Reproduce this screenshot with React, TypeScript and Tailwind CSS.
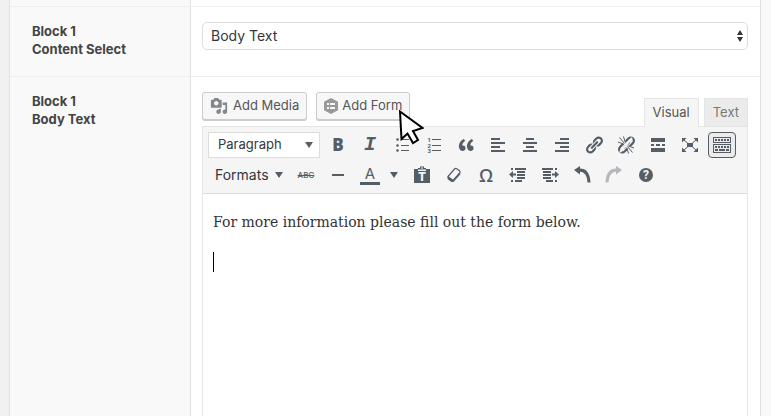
import React from 'react';

type IconProps = { children: React.ReactNode; className?: string };

const Icon = ({ children, className = 'h-5 w-5' }: IconProps) => (
  <svg viewBox="0 0 20 20" className={`${className} shrink-0 fill-current`} aria-hidden="true">
    {children}
  </svg>
);

const ToolButton = ({ label, active, children }: { label: string; active?: boolean; children: React.ReactNode }) => (
  <button
    type="button"
    aria-label={label}
    title={label}
    className={`flex h-[26px] w-7 shrink-0 items-center justify-center rounded-sm ${
      active ? 'border border-[#555d66] bg-[#ebebeb]' : ''
    }`}
  >
    {children}
  </button>
);

const DownArrow = () => (
  <svg viewBox="0 0 8 6" className="h-[6px] w-2 fill-[#555d66]" aria-hidden="true">
    <path d="M0 0h8L4 6z" />
  </svg>
);

const linkPath =
  'M17.74 2.76c1.68 1.69 1.68 4.41 0 6.1l-1.53 1.52c-1.12 1.12-2.7 1.47-4.14 1.09l2.62-2.61.76-.77.76-.76c.84-.84.84-2.2 0-3.04-.84-.85-2.2-.85-3.04 0l-.77.76-3.38 3.38c-.37-1.44-.02-3.02 1.1-4.14l1.52-1.53c1.69-1.68 4.42-1.68 6.1 0zM8.59 13.43l5.34-5.34c.42-.42.42-1.1 0-1.52-.44-.43-1.13-.39-1.53 0l-5.33 5.34c-.42.42-.42 1.1 0 1.52.44.43 1.13.39 1.52 0zm-.76 2.29l4.14-4.15c.38 1.44.03 3.02-1.09 4.14l-1.52 1.53c-1.69 1.68-4.41 1.68-6.1 0-1.68-1.68-1.68-4.42 0-6.1l1.53-1.52c1.12-1.12 2.7-1.47 4.14-1.1l-4.14 4.15c-.85.84-.85 2.2 0 3.05.84.84 2.2.84 3.04 0z';

const FormatRow = () => (
  <div className="flex flex-wrap items-center gap-1">
    <div className="relative">
      <select
        aria-label="Block format"
        className="block h-[26px] w-28 appearance-none border border-[#ddd] bg-white pl-[9px] text-[13px] text-[#32373c]"
      >
        <option>Paragraph</option>
      </select>
      <span className="pointer-events-none absolute inset-y-0 right-[7px] flex items-center">
        <DownArrow />
      </span>
    </div>
    <ToolButton label="Bold">
      <span className="font-['Open_Sans'] text-[17px] leading-5 font-extrabold">B</span>
    </ToolButton>
    <ToolButton label="Italic">
      <span className="font-['Liberation_Mono'] text-xl leading-5 font-bold italic">I</span>
    </ToolButton>
    <ToolButton label="Bulleted list">
      <Icon>
        <circle cx="5.500" cy="4.500" r="1.300" />
        <circle cx="5.500" cy="10.500" r="1.300" />
        <circle cx="5.500" cy="15.500" r="1.300" />
        <path d="M9 4h8v1H9zM9 10h8v1H9zM9 15h8v1H9z" />
      </Icon>
    </ToolButton>
    <ToolButton label="Numbered list">
      <Icon>
        <g className="font-['Roboto'] text-[6px] font-bold">
          <text x="3.500" y="6.500">1</text>
          <text x="3.500" y="12.500">2</text>
          <text x="3.500" y="18">3</text>
        </g>
        <path d="M8 4h9v1H8zM8 10h9v1H8zM8 15h9v1H8z" />
      </Icon>
    </ToolButton>
    <ToolButton label="Blockquote">
      <Icon>
        <path d="M9.49 13.22c0-.74-.2-1.38-.61-1.9-.62-.78-1.83-.88-2.53-.72-.29-1.65 1.11-3.75 2.92-4.65L7.88 4c-2.73 1.3-5.42 4.28-4.96 8.05C3.21 14.43 4.59 16 6.54 16c.85 0 1.56-.25 2.12-.75s.83-1.18.83-2.03zm8.05 0c0-.74-.2-1.38-.61-1.9-.63-.78-1.83-.88-2.53-.72-.29-1.65 1.11-3.75 2.92-4.65L15.93 4c-2.73 1.3-5.41 4.28-4.95 8.05.29 2.38 1.66 3.95 3.61 3.95.85 0 1.56-.25 2.12-.75s.83-1.18.83-2.03z" />
      </Icon>
    </ToolButton>
    <ToolButton label="Align left">
      <Icon>
        <path d="M12 5V3H3v2h9zm5 4V7H3v2h14zm-5 4v-2H3v2h9zm5 4v-2H3v2h14z" />
      </Icon>
    </ToolButton>
    <ToolButton label="Align center">
      <Icon>
        <path d="M14 5V3H6v2h8zm3 4V7H3v2h14zm-3 4v-2H6v2h8zm3 4v-2H3v2h14z" />
      </Icon>
    </ToolButton>
    <ToolButton label="Align right">
      <Icon>
        <path d="M17 5V3H8v2h9zm0 4V7H3v2h14zm0 4v-2H8v2h9zm0 4v-2H3v2h14z" />
      </Icon>
    </ToolButton>
    <ToolButton label="Insert link">
      <Icon>
        <path d={linkPath} />
      </Icon>
    </ToolButton>
    <ToolButton label="Remove link">
      <Icon>
        <path d={linkPath} />
        <path d="M4 2l12 16M16 3L4 17" className="fill-none stroke-[#f5f5f5] stroke-2" />
        <path
          d="M3.500 2.500l5 6M7.500 1.500l1.700 5.700M2 7l5.500 2M16.500 17.500l-5-6M12.500 18.500l-1.700-5.700M18 13l-5.500-2"
          className="fill-none stroke-current stroke-1"
        />
      </Icon>
    </ToolButton>
    <ToolButton label="Insert Read More tag">
      <Icon>
        <path d="M17 7V3H3v4h14zM6 11V9H3v2h3zm6 0V9H8v2h4zm5 0V9h-3v2h3zm0 6v-4H3v4h14z" />
      </Icon>
    </ToolButton>
    <ToolButton label="Fullscreen">
      <Icon>
        <path d="M7 8h6v4H7zM2 3h4.500L2 7.500zM18 3v4.500L13.500 3zM2 17v-4.500L6.500 17zM18 17h-4.500l4.500-4.500z" />
        <path d="M3.500 4.500L8 8.500M16.500 4.500L12 8.500M3.500 15.500L8 11.500M16.500 15.500L12 11.500" className="stroke-current stroke-1" />
      </Icon>
    </ToolButton>
    <ToolButton label="Toolbar toggle" active>
      <Icon>
        <path
          fillRule="evenodd"
          d="M1 2h18v6H1zM2 3v4h16V3zM3 4h2v2H3zM6 4h2v2H6zM9 4h2v2H9zM12 4h2v2h-2zM15 4h2v2h-2zM1 9h18v9H1zM2 10v7h16v-7zM3 11h2v2H3zM6 11h2v2H6zM9 11h2v2H9zM12 11h2v2h-2zM15 11h2v2h-2zM3 14h3v2H3zM7 14h6v2H7zM14 14h3v2h-3z"
        />
      </Icon>
    </ToolButton>
  </div>
);

const AdvancedRow = () => (
  <div className="flex flex-wrap items-center gap-1">
    <div className="relative">
      <select
        aria-label="Formats"
        className="block h-[26px] w-20 appearance-none bg-transparent pl-[7px] text-sm text-[#32373c]"
      >
        <option>Formats</option>
      </select>
      <span className="pointer-events-none absolute inset-y-0 right-[5px] flex items-center">
        <DownArrow />
      </span>
    </div>
    <ToolButton label="Strikethrough">
      <span className="text-[8px] leading-3 font-medium line-through">ABC</span>
    </ToolButton>
    <ToolButton label="Horizontal line">
      <Icon>
        <path d="M4 9h12v2H4z" />
      </Icon>
    </ToolButton>
    <div className="flex">
      <ToolButton label="Text color">
        <span className="w-5 border-b-3 border-[#555d66] text-center text-[15px] leading-4">A</span>
      </ToolButton>
      <button type="button" aria-label="Choose text color" className="flex w-5 items-center justify-center">
        <DownArrow />
      </button>
    </div>
    <ToolButton label="Paste as text">
      <Icon>
        <path d="M2 4h4V3h2V1.500h4V3h2v1h4v14H2z" />
        <path d="M6 4.500h8v1.500H6zM9 2.500h2v1H9z" className="fill-[#f5f5f5]" />
        <text x="10" y="16" textAnchor="middle" className="fill-[#f5f5f5] font-['Roboto'] text-[12px] font-black">
          T
        </text>
      </Icon>
    </ToolButton>
    <ToolButton label="Clear formatting">
      <Icon>
        <path
          d="M4 11.500L10.500 4Q11.500 3 12.700 3.800L15.500 5.800Q16.600 6.700 15.700 8L9 15.500Z"
          className="fill-none stroke-current"
          strokeWidth="1.200"
        />
        <path d="M3.500 11.500l5.500 4L16.200 7.200V9.500L9.500 17H7.500L4 14.500Q3 13.500 3.500 11.500z" />
      </Icon>
    </ToolButton>
    <ToolButton label="Special character">
      <span className="font-['Open_Sans'] text-lg leading-5 font-semibold">Ω</span>
    </ToolButton>
    <ToolButton label="Decrease indent">
      <Icon>
        <path d="M7 3h11v2H7zM3 3h2v2H3zM9 6h8v2H9zM9 9h8v2H9zM9 12h8v2H9zM7 15h7v2H7zM3 15h2v2H3zM1 9.500L5 6v2.500h3v2H5V13z" />
      </Icon>
    </ToolButton>
    <ToolButton label="Increase indent">
      <Icon>
        <path d="M2 3h11v2H2zM15 3h2v2h-2zM3 6h8v2H3zM3 9h8v2H3zM3 12h8v2H3zM6 15h7v2H6zM15 15h2v2h-2zM19 9.500L15 6v2.500h-3v2h3V13z" />
      </Icon>
    </ToolButton>
    <ToolButton label="Undo">
      <Icon>
        <path d="M2 5l6-4v2.500c6 0 10 4 10.500 14h-3C15 10.500 12.500 7 8 6.800V9.500z" />
      </Icon>
    </ToolButton>
    <ToolButton label="Redo">
      <Icon className="h-5 w-5 opacity-40">
        <path d="M18 5l-6-4v2.500c-6 0-10 4-10.500 14h3C5 10.500 7.500 7 12 6.800V9.500z" />
      </Icon>
    </ToolButton>
    <ToolButton label="Keyboard shortcuts">
      <Icon>
        <circle cx="10" cy="10" r="7" />
        <text x="10" y="14" textAnchor="middle" className="fill-[#f5f5f5] font-['Roboto'] text-[12px] font-bold">
          ?
        </text>
      </Icon>
    </ToolButton>
  </div>
);

const mediaButton =
  'relative flex h-7 items-center rounded-[3px] border border-[#ccc] bg-[#f7f7f7] px-[7px] text-[13px] text-[#555] shadow-[0_1px_0_#ccc]';

const Editor = () => (
  <div>
    <div className="flex items-start justify-between">
      <div className="flex gap-[9px]">
        <button type="button" className={mediaButton}>
          <Icon className="mr-[5px] h-[18px] w-[18px] text-[#82878c]">
            <path d="M13 11V4c0-.55-.45-1-1-1h-1.67L9 1H5L3.67 3H2c-.55 0-1 .45-1 1v7c0 .55.45 1 1 1h10c.55 0 1-.45 1-1zM7 4.500c1.380 0 2.500 1.120 2.500 2.500S8.380 9.500 7 9.500 4.500 8.380 4.500 7 5.620 4.500 7 4.500zM14 6h5v10.500c0 1.380-1.120 2.500-2.500 2.500S14 17.880 14 16.500s1.120-2.500 2.500-2.500c.17 0 .34.02.5.05V9h-3V6zm-4 8.050V13h2v3.500c0 1.380-1.120 2.500-2.500 2.500S7 17.880 7 16.500 8.120 14 9.500 14c.17 0 .34.02.5.050z" />
          </Icon>
          Add Media
        </button>
        <button type="button" className={mediaButton}>
          <svg viewBox="0 0 14 16" className="mr-1 h-4 w-[14px] fill-[#999]" aria-hidden="true">
            <path d="M7 0l7 3.700v8.600L7 16l-7-3.700V3.700z" />
            <path d="M3 5h2v2H3zM6 5h5v2H6zM3 9h2v2H3zM6 9h5v2H6z" className="fill-[#f7f7f7]" />
          </svg>
          Add Form
          {/* mouse pointer */}
          <svg viewBox="0 0 26 36" className="pointer-events-none absolute top-4 left-[81px] h-9 w-[26px]" aria-hidden="true">
            <path
              d="M2 2.500L3.500 30l6-5.500 5.500 9.500 5-3-5-9 9.500-3z"
              className="fill-white stroke-black"
              strokeWidth="2"
            />
          </svg>
        </button>
      </div>
      <div className="mt-[6px] flex gap-[5px] text-[13px]">
        <button type="button" className="-mb-px h-[29px] border border-b-0 border-[#e5e5e5] bg-[#f5f5f5] px-2 text-[#555]">
          Visual
        </button>
        <button type="button" className="h-7 border border-b-0 border-[#e5e5e5] bg-[#ebebeb] px-2 text-[#777]">
          Text
        </button>
      </div>
    </div>
    <div className="border border-[#e5e5e5]">
      <div className="flex flex-col gap-1 border-b border-[#ddd] bg-[#f5f5f5] p-[5px] text-[#555d66]">
        <FormatRow />
        <AdvancedRow />
      </div>
      <div className="relative">
        <textarea
          aria-label="Body Text"
          rows={12}
          defaultValue="For more information please fill out the form below."
          className="block w-full resize-none bg-white px-[10px] pt-4 font-['DejaVu_Serif',serif] text-sm leading-6 text-[#333] outline-none"
        />
        <span className="absolute top-[58px] left-[10px] h-5 w-px bg-black" />
      </div>
    </div>
  </div>
);

const Row = ({ title, name, htmlFor, children }: { title: string; name: string; htmlFor?: string; children: React.ReactNode }) => (
  <div className="grid grid-cols-[181px_minmax(0,1fr)] border-t border-[#eee]">
    <div className="border-r border-[#e1e1e1] bg-[#f9f9f9] py-[15px] pl-[22px]">
      <label htmlFor={htmlFor} className="block text-[13px] leading-[18px] font-bold text-[#444]">
        {title}
        <br />
        {name}
      </label>
    </div>
    <div className="py-[15px] pr-3 pl-[11px]">{children}</div>
  </div>
);

export default function App() {
  return (
    <div className="flex h-screen overflow-hidden bg-[#f9f9f9] pr-[10px] font-['Inter',sans-serif]">
      <div className="w-[9px] shrink-0 bg-[#f1f1f1]" />
      <main className="min-w-0 flex-1 border-x border-[#e1e1e1] bg-white">
        <div className="grid grid-cols-[181px_minmax(0,1fr)]">
          <div className="h-[6px] border-r border-[#e1e1e1] bg-[#f9f9f9]" />
        </div>
        <Row title="Block 1" name="Content Select" htmlFor="content-select">
          <div className="relative h-[39px]">
            <select
              id="content-select"
              className="block h-7 w-full appearance-none rounded-[5px] border border-[#ddd] bg-white pl-2 text-sm text-[#32373c]"
            >
              <option>Body Text</option>
            </select>
            <svg viewBox="0 0 6 12" className="pointer-events-none absolute top-2 right-[5px] h-3 w-[6px] fill-[#333]" aria-hidden="true">
              <path d="M3 0l3 5H0zM3 12L0 7h6z" />
            </svg>
          </div>
        </Row>
        <Row title="Block 1" name="Body Text">
          <Editor />
        </Row>
      </main>
    </div>
  );
}
